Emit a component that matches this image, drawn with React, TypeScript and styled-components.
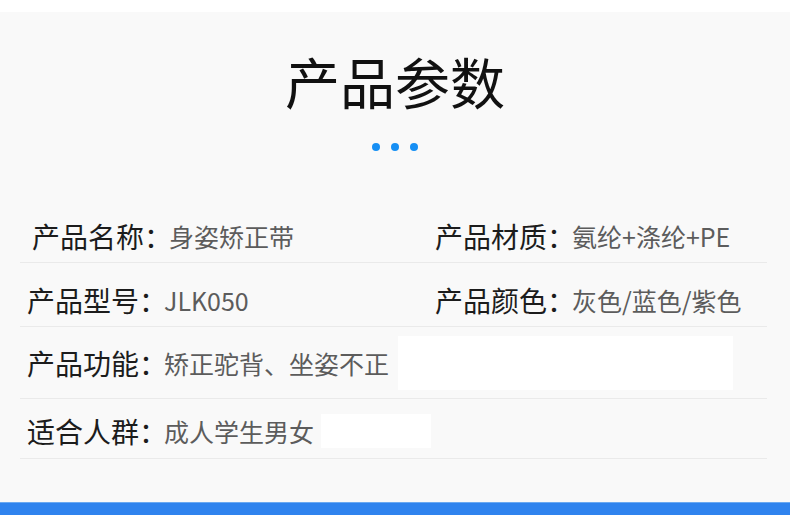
import React from 'react';
import styled, { createGlobalStyle } from 'styled-components';

interface Spec {
  label: string;
  value: string;
}

interface RowSpec {
  height: number;
  shift: number;
  indent: number;
  cells: Spec[];
  mask?: { width: number; height: number; gap: number };
}

const GlobalStyle = createGlobalStyle`
  html, body {
    margin: 0;
    padding: 0;
    background: #ffffff;
  }
  body {
    font-family: "Noto Sans CJK SC", "Noto Sans", "Liberation Sans", sans-serif;
  }
`;

const Page = styled.div`
  width: 790px;
  height: 515px;
  display: flex;
  flex-direction: column;
  overflow: hidden;
  background: #ffffff;
`;

const TopStrip = styled.div`
  height: 12px;
  background: #ffffff;
`;

const Panel = styled.div`
  flex: 1;
  display: flex;
  flex-direction: column;
  background: #f9f9f9;
`;

const Title = styled.h1`
  margin: 36px 0 0;
  text-align: center;
  font-size: 55px;
  line-height: 64px;
  font-weight: 400;
  color: #111111;
`;

const Dots = styled.div`
  margin-top: 31px;
  display: flex;
  justify-content: center;
  gap: 11px;
`;

const Dot = styled.span`
  width: 8px;
  height: 8px;
  border-radius: 50%;
  background: #168ff4;
`;

const Table = styled.div`
  margin: 54px 23px 0 20px;
  display: flex;
  flex-direction: column;
`;

const Row = styled.div<{ $height: number; $shift: number }>`
  height: ${p => p.$height}px;
  box-sizing: border-box;
  padding-top: ${p => p.$shift}px;
  display: grid;
  grid-template-columns: 415px 1fr;
  align-items: center;
  border-bottom: 1px solid #eaeaea;
`;

const Cell = styled.div<{ $indent: number; $wide: boolean }>`
  display: flex;
  align-items: center;
  padding-left: ${p => p.$indent}px;
  grid-column: ${p => (p.$wide ? '1 / -1' : 'auto')};
  white-space: nowrap;
`;

const Label = styled.span`
  font-size: 28px;
  line-height: 32px;
  color: #1c1c1c;
`;

const Value = styled.span`
  font-size: 25px;
  line-height: 32px;
  color: #5c5c5c;
  margin-left: -3px;
`;

const Mask = styled.span<{ $w: number; $h: number; $gap: number }>`
  display: inline-block;
  width: ${p => p.$w}px;
  height: ${p => p.$h}px;
  margin-left: ${p => p.$gap}px;
  background: #ffffff;
`;

const Spacer = styled.div`
  flex: 1;
`;

const BlueBar = styled.div`
  height: 13px;
  background: #2f83ee;
  border-top: 1px solid #6aa9f2;
  box-sizing: border-box;
`;

const rows: RowSpec[] = [
  {
    height: 58,
    shift: 4,
    indent: 12,
    cells: [
      { label: '产品名称：', value: '身姿矫正带' },
      { label: '产品材质：', value: '氨纶+涤纶+PE' },
    ],
  },
  {
    height: 64,
    shift: 11,
    indent: 7,
    cells: [
      { label: '产品型号：', value: 'JLK050' },
      { label: '产品颜色：', value: '灰色/蓝色/紫色' },
    ],
  },
  {
    height: 72,
    shift: 0,
    indent: 7,
    cells: [{ label: '产品功能：', value: '矫正驼背、坐姿不正' }],
    mask: { width: 335, height: 54, gap: 9 },
  },
  {
    height: 60,
    shift: 4,
    indent: 7,
    cells: [{ label: '适合人群：', value: '成人学生男女' }],
    mask: { width: 110, height: 34, gap: 7 },
  },
];

export default function App() {
  return (
    <Page>
      <GlobalStyle />
      <TopStrip />
      <Panel>
        <Title>产品参数</Title>
        <Dots>
          <Dot />
          <Dot />
          <Dot />
        </Dots>
        <Table>
          {rows.map((row, i) => (
            <Row key={i} $height={row.height} $shift={row.shift}>
              {row.cells.map((cell, j) => (
                <Cell key={j} $indent={j === 0 ? row.indent : 0} $wide={row.cells.length === 1}>
                  <Label>{cell.label}</Label>
                  <Value>{cell.value}</Value>
                  {row.mask && <Mask $w={row.mask.width} $h={row.mask.height} $gap={row.mask.gap} />}
                </Cell>
              ))}
            </Row>
          ))}
        </Table>
        <Spacer />
      </Panel>
      <BlueBar />
    </Page>
  );
}
